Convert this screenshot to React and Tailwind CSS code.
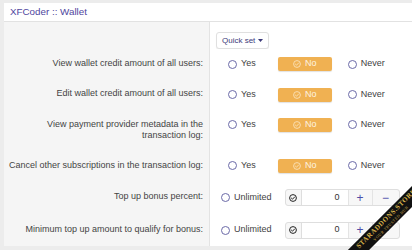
import React from "react";

const font = { fontFamily: '"Liberation Sans", Arial, sans-serif' };

function Radio({ label, className = "" }) {
  return (
    <span className={"flex items-center gap-[4px] " + className}>
      <span className="w-[9px] h-[9px] rounded-full border border-[#6b6aa8] bg-white" />
      <span className="text-[9px] text-[#3f3f3f]">{label}</span>
    </span>
  );
}

function CheckCircle({ color = "white", size = 8, sw = 1.6 }) {
  return (
    <svg width={size} height={size} viewBox="0 0 16 16" fill="none" stroke={color} strokeWidth={sw}>
      <circle cx="8" cy="8" r="6.8" />
      <path d="M4.8 8.2l2.2 2.2 4.2-4.4" strokeLinecap="round" strokeLinejoin="round" />
    </svg>
  );
}

function Choice() {
  return (
    <div className="flex items-center h-[14px]">
      <Radio label="Yes" className="ml-[18px]" />
      <span className="ml-[22px] w-[54px] h-[14px] rounded-[2px] bg-[#f0b152] flex items-center justify-center gap-[4px] shadow-[0_1px_1px_rgba(0,0,0,0.12)]">
        <CheckCircle color="#fbe7c6" size={8} />
        <span className="text-[9px] text-[#fdf3e3]">No</span>
      </span>
      <Radio label="Never" className="ml-[16px]" />
    </div>
  );
}

function Spinner() {
  return (
    <div className="flex items-center h-[17px]">
      <Radio label="Unlimited" className="ml-[11px]" />
      <div className="ml-[13px] flex h-[17px] w-[115px] border border-[#dedede] rounded-[3px] overflow-hidden bg-[#f7f7f7]">
        <span className="w-[16px] flex items-center justify-center border-r border-[#dedede]">
          <CheckCircle color="#222" size={8} sw={2} />
        </span>
        <span className="flex-1 bg-white flex items-center justify-end pr-[8px] text-[9px] text-[#333]">0</span>
        <span className="w-[24px] flex items-center justify-center border-l border-[#e4e4e4] text-[12px] text-[#4d4ca8] leading-none">+</span>
        <span className="w-[27px] flex items-center justify-center border-l border-[#e4e4e4] text-[12px] text-[#4d4ca8] leading-none">−</span>
      </div>
    </div>
  );
}

function Row({ label, children, lines, spin }) {
  return (
    <div className="flex">
      <div
        className={
          "w-[205px] shrink-0 bg-[#f5f5f5] text-right pr-[6px] pl-[2px] text-[9px] leading-[11.5px] text-[#444] whitespace-nowrap " +
          (spin ? "pt-[10px] pb-[8px]" : "py-[9px]")
        }
      >
        {lines ? lines.map((l, i) => <div key={i}>{l}</div>) : label}
      </div>
      <div className={"flex-1 bg-white border-l border-[#e3e3e3] " + (spin ? "pt-[8px] pb-[7.5px]" : "py-[8.2px]")}>{children}</div>
    </div>
  );
}

export default function App() {
  return (
    <div style={font} className="relative w-[412px] h-[250px] overflow-hidden bg-[#ececec] pl-[4px] pt-[3px]">
      <div className="bg-white h-[19px] flex items-center pl-[6px] border-b border-[#e2e2e2]">
        <span className="text-[9.8px] text-[#4f469e]">XFCoder :: Wallet</span>
      </div>
      <div className="flex">
        <div className="w-[205px] shrink-0 bg-[#f5f5f5]" />
        <div className="flex-1 flex bg-white border-l border-[#e3e3e3] pt-[10px] pl-[6px]">
          <span className="flex items-center gap-[3px] h-[17px] px-[5px] border border-[#e0e0e0] rounded-[3px] bg-white text-[8px] text-[#3c3a7a] shadow-[0_1px_1px_rgba(0,0,0,0.06)]">
            Quick set
            <svg width="5" height="3" viewBox="0 0 10 6"><path d="M0 0h10L5 6z" fill="#3c3a7a" /></svg>
          </span>
        </div>
      </div>
      <Row label="View wallet credit amount of all users:"><Choice /></Row>
      <Row label="Edit wallet credit amount of all users:"><Choice /></Row>
      <Row lines={["View payment provider metadata in the", "transaction log:"]}><Choice /></Row>
      <Row label="Cancel other subscriptions in the transaction log:"><Choice /></Row>
      <Row label="Top up bonus percent:" spin><Spinner /></Row>
      <Row label="Minimum top up amount to qualify for bonus:" spin><Spinner /></Row>

      <div className="absolute left-[308px] top-[213px] w-[160px] h-[15px] -rotate-45 bg-[#111] flex flex-col items-center justify-center leading-none" style={{ fontFamily: '"Liberation Serif", serif' }}>
        <span className="text-[7px] font-bold tracking-[0.5px] text-[#d7b24a]">STARADDONS.STORE</span>
        <span className="text-[4px] tracking-[0.5px] text-[#c9a748] mt-[1px]">YOUR TRUSTED HUB</span>
      </div>
    </div>
  );
}
